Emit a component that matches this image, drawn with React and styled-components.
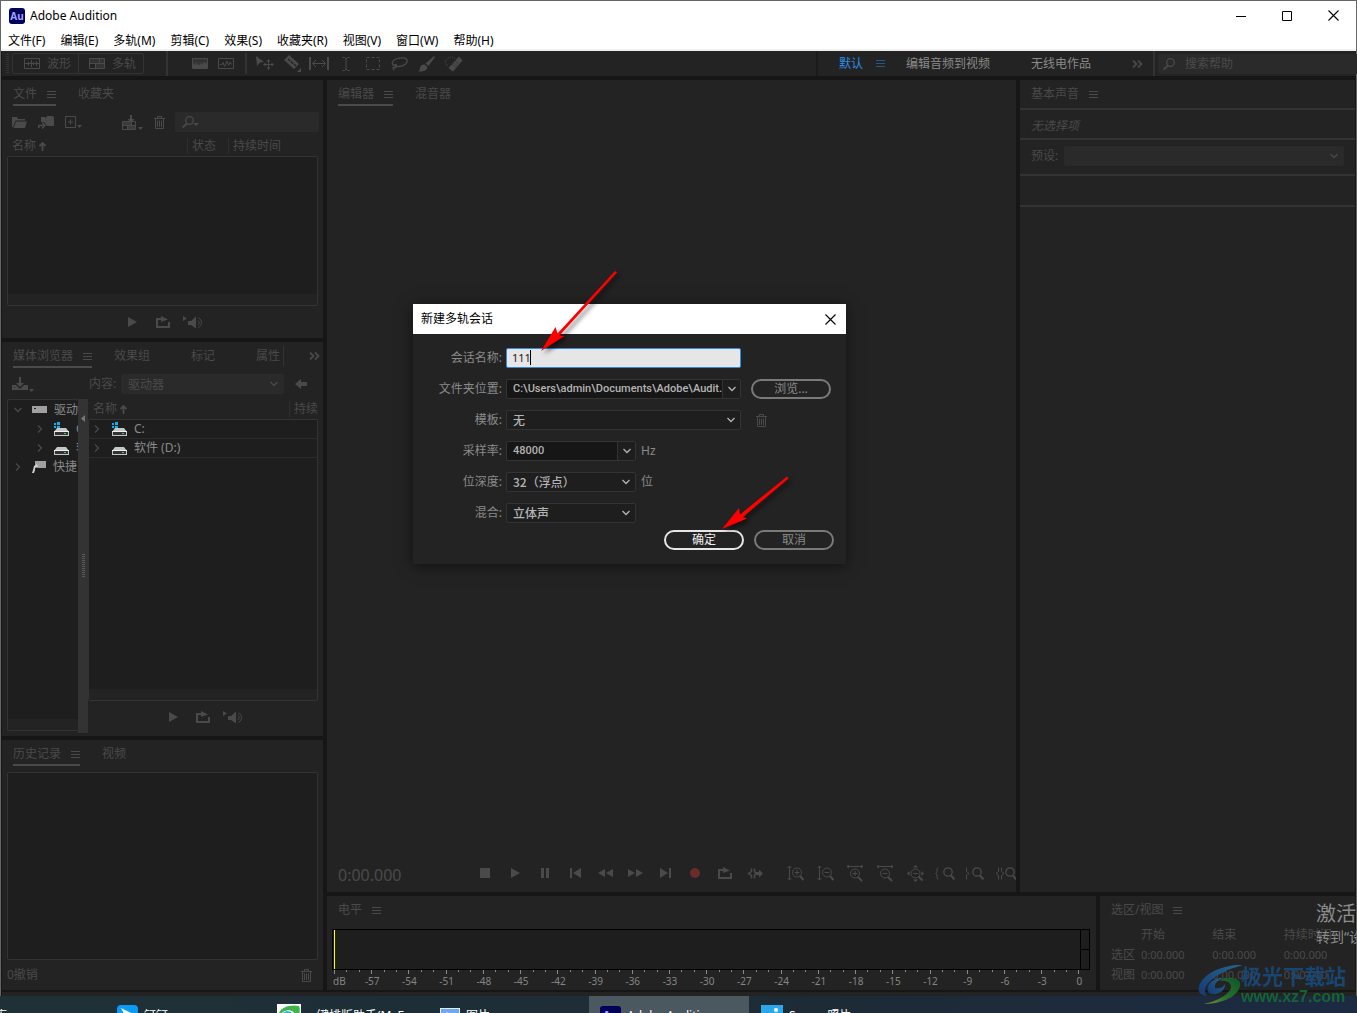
import React, { useState } from "react";
import styled, { createGlobalStyle } from "styled-components";

const GlobalStyle = createGlobalStyle`
	* {
		box-sizing: border-box;
	}
	body {
		margin: 0;
		background: #161616;
	}
	body, button, input, select, table {
		font-family: "Noto Sans", "Noto Sans CJK SC", sans-serif;
		font-size: 12px;
		line-height: 16px;
	}
	button, input, select {
		margin: 0;
		padding: 0;
		border: none;
		background: none;
		color: inherit;
	}
`;

const line = { fill: "none", stroke: "currentColor" };
const solid = { fill: "currentColor" };

/* every icon: [width, height, drawing] */
const icons = {
	menu: [9, 9, <path {...line} d="M0 1.5h9M0 4.5h9M0 7.5h9" />],
	chevronDown: [8, 6, <path {...line} strokeWidth="1.3" d="M.5 1l3.5 3.5L7.5 1" />],
	chevronRight: [6, 8, <path {...line} strokeWidth="1.2" d="M1 .5L4.5 4 1 7.5" />],
	more: [11, 8, <path {...line} strokeWidth="1.8" d="M1 .5L4.5 4 1 7.5M6 .5L9.5 4 6 7.5" />],
	sortUp: [7, 9, <path {...line} strokeWidth="1.8" d="M3.5 9V1M.5 4l3-3 3 3" />],
	minimize: [10, 10, <path {...line} d="M0 5.5h10" />],
	maximize: [10, 10, <path {...line} d="M.5.5h9v9h-9z" />],
	close: [11, 11, <path {...line} strokeWidth="1.1" d="M.5.5l10 10M10.5.5l-10 10" />],
	waveform: [
		16,
		11,
		<path {...line} d="M.5.5h15v10H.5zM1 5.5h14M4.5 3.5v4M7.5 2v7M9.5 4v3M12.5 3v5" />,
	],
	multitrack: [
		16,
		11,
		<>
			<path {...line} d="M.5.5h15v10H.5zM0 5.5h16M10.5 0v5M6.5 5v6" />
			<path {...solid} opacity=".4" d="M1 1h9v4H1zM11 1h4v4h-4zM7 6h8v4H7z" />
		</>,
	],
	spectral: [
		16,
		11,
		<>
			<path {...line} d="M.5.5h15v10H.5z" />
			<path {...solid} d="M1 10V6l1-1 1 2 1-3 1 3 1-2 1 2 2-2 1 2 1-3 1 2 1-3 1 3 1-2v6z" />
			<path {...solid} opacity=".4" d="M1 1h14v5H1z" />
		</>,
	],
	pitch: [
		16,
		11,
		<path {...line} d="M.5.5h15v10H.5zM2 6.5h2l1-2 1.5 4L9 3l1.5 4.5L12 4l1 2h1" />,
	],
	move: [
		18,
		15,
		<>
			<path {...solid} d="M0 0l8 6-4 .5L1 10zM12.5 3l2 2.5h-4zM12.5 14l2-2.5h-4zM7 8.5l2.5-2v4zM18 8.5l-2.5-2v4z" />
			<path {...line} d="M12.5 5v7M9 8.5h7" />
		</>,
	],
	razor: [
		18,
		17,
		<>
			<path {...solid} d="M1 5l5-5 10 9-5 5zM18 13v4h-4z" />
			<path d="M5 4l8 7" stroke="#232323" strokeWidth="1.5" strokeDasharray="3 1" />
		</>,
	],
	slip: [
		20,
		13,
		<>
			<path {...line} strokeWidth="2" d="M1 0v13M19 0v13" />
			<path {...line} d="M4 6.5h12M7 3L3.5 6.5 7 10M13 3l3.5 3.5L13 10" />
		</>,
	],
	ibeam: [8, 14, <path {...line} d="M.5.5h2L4 2 5.5.5h2M4 2v10M.5 13.5h2L4 12l1.5 1.5h2" />],
	marquee: [14, 13, <path {...line} strokeDasharray="3 2" d="M.5.5h13v12H.5z" />],
	lasso: [
		17,
		14,
		<path {...line} strokeWidth="1.3" d="M3 9C0 7 1 3.500 5 2s10-2 11 1-3 6-8 6.500C4 10 2.500 8 4 7.500s2 2 .5 3L2 11l1 2.500" />,
	],
	brush: [
		17,
		16,
		<path {...solid} d="M16 0l1 1-6.500 9-3-2.500zM6.500 8.500l3 2.500c-.5 4-5 5-9.500 4.500 2-.5 1.500-2 2-4s2.500-3.500 4.500-3z" />,
	],
	heal: [
		18,
		16,
		<>
			<path {...solid} d="M14 .5l3.500 4L8 15.500 3.500 12z" />
			<path {...line} strokeDasharray="1 1" d="M.5 7C0 3 3 1 8 1M1 8l2 2M9 2l2 1" />
			<path d="M10.500 5l3.500 3M7.500 8.500l3.500 3M9.500 7.500l2 2" stroke="#232323" strokeDasharray="1 1" />
		</>,
	],
	search: [
		12,
		12,
		<>
			<circle {...line} cx="7.5" cy="4.5" r="3.8" strokeWidth="1.3" />
			<path {...line} strokeWidth="1.8" d="M5 7.500L.5 11.500" />
		</>,
	],
	filter: [
		17,
		12,
		<>
			<circle {...line} cx="7.5" cy="4.5" r="3.8" strokeWidth="1.3" />
			<path {...line} strokeWidth="1.8" d="M5 7.500L.5 11.500" />
			<path {...solid} d="M11 7h6l-3 3z" />
		</>,
	],
	folder: [15, 12, <path {...solid} d="M0 11V1h5l1 2h7v1.500H3.500L1 11zM4 5.500h11L13 12H1.500z" />],
	importFile: [
		16,
		14,
		<>
			<path {...solid} d="M3 7V2h4l1 1.500L9 1h6v1h1v9H9l-3-4z" />
			<path {...line} strokeWidth="1.5" d="M0 10.500h6M4 7.500l3 3-3 3M.8 10V13" />
		</>,
	],
	newFile: [
		17,
		13,
		<>
			<path {...line} d="M.5.5h10v11H.5zM3 6h5M5.500 3.500v5" />
			<path {...solid} d="M12 9h5l-2.500 3z" />
		</>,
	],
	insert: [
		21,
		15,
		<>
			<path {...line} d="M.5 6.500h13v8H.5zM0 10.500h14M5.500 10v5M9.500 6v4" />
			<path {...solid} opacity=".6" d="M1 7h8v3H1zM6 11h8v3H6z" />
			<path {...solid} d="M8 0h2v4h2.500L9 8 5.500 4H8zM16 12h5l-2.500 3z" />
		</>,
	],
	trash: [
		11,
		13,
		<path {...line} d="M0 2.500h11M3.500 2V.5h4V2M1.500 3v9.500h8V3M3.500 4.500v6.500M5.500 4.500v6.500M7.500 4.500v6.500" />,
	],
	play: [9, 10, <path {...solid} d="M0 0l9 5-9 5z" />],
	loop: [
		14,
		12,
		<>
			<path {...line} strokeWidth="2" d="M4 3H1v8h12V6" />
			<path {...line} strokeWidth="2" d="M4 3h5" />
			<path {...solid} d="M5 0l7 3.500L5 6z" />
		</>,
	],
	speaker: [
		20,
		13,
		<>
			<path {...solid} d="M0 0l4 2.500L0 5zM5 5h3l5-4.500v12L8 9H5z" />
			<path {...line} d="M15 4.500c1.500 1 1.500 3 0 4.500M15.500 2c4 2 4 7 0 9.500" />
		</>,
	],
	download: [
		22,
		15,
		<>
			<path {...solid} d="M0 8h4l4 4 4-4h4v5H0zM7 0h2v6h3l-4 4-4-4h3zM17 12h5l-2.500 3z" />
			<path fill="#232323" d="M2 10h1v1H2z" />
		</>,
	],
	back: [12, 10, <path {...solid} d="M0 5l6-5v3h6v4H6v3z" />],
	drive: [
		15,
		7,
		<>
			<path fill="#a0a0a0" d="M0 0h15v7H0z" />
			<path fill="#222" d="M2 2h2v1H2z" />
		</>,
	],
	disk: [
		15,
		14,
		<>
			<path fill="#c4c8c8" d="M3 6h9l3 4v4H0v-4z" />
			<path fill="#f0f0f0" d="M0 9h15v1H0z" />
			<path fill="#333" d="M1 10h13v3H1z" />
			<path fill="#39d353" d="M10 11h2v1h-2z" />
		</>,
	],
	systemDisk: [
		15,
		14,
		<>
			<path fill="#c4c8c8" d="M3 6h9l3 4v4H0v-4z" />
			<path fill="#f0f0f0" d="M0 9h15v1H0z" />
			<path fill="#333" d="M1 10h13v3H1z" />
			<path fill="#39d353" d="M10 11h2v1h-2z" />
			<path fill="#0fb0f2" d="M0 1h2v2H0zM3 0h3v3H3zM0 4h2v2H0zM3 4h3v2H3z" />
		</>,
	],
	shortcut: [
		14,
		12,
		<>
			<path fill="#a0a0a0" d="M3 0h11v7H6L3 5z" />
			<path fill="#d0d0d0" d="M2 5l3-2 1 3-3 1v2l-1 3H0l1-3z" />
		</>,
	],
	stop: [10, 10, <path {...solid} d="M0 0h10v10H0z" />],
	pause: [8, 10, <path {...solid} d="M0 0h3v10H0zM5 0h3v10H5z" />],
	prev: [11, 10, <path {...solid} d="M0 0h2v10H0zM11 0v10L3 5z" />],
	next: [11, 10, <path {...solid} d="M9 0h2v10H9zM0 0v10l8-5z" />],
	rewind: [15, 8, <path {...solid} d="M7 0v8L0 4zM15 0v8L8 4z" />],
	forward: [15, 8, <path {...solid} d="M0 0v8l7-4zM8 0v8l7-4z" />],
	record: [10, 10, <circle cx="5" cy="5" r="5" fill="#6a2b2b" />],
	skip: [
		16,
		11,
		<>
			<path {...line} strokeWidth="1.5" d="M4.500.5v3L1.500 5.500l3 2v3M7.500.5v3L9 5.500l-1.500 2v3" />
			<path {...solid} d="M9 4h3V1.500l4 4-4 4V7H9z" />
		</>,
	],
	zoomInV: [
		17,
		17,
		<>
			<path {...line} d="M2.500 1v14M.5 3l2-2 2 2M.5 13l2 2 2-2M7.500 7.500h5M10 5v5" />
			<circle {...line} cx="10" cy="7.5" r="4.5" />
			<path {...line} strokeWidth="2" d="M13 11l3.500 4" />
		</>,
	],
	zoomOutV: [
		17,
		17,
		<>
			<path {...line} d="M2.500 1v14M.5 3l2-2 2 2M.5 13l2 2 2-2M7.500 7.500h5" />
			<circle {...line} cx="10" cy="7.5" r="4.5" />
			<path {...line} strokeWidth="2" d="M13 11l3.500 4" />
		</>,
	],
	zoomInH: [
		18,
		17,
		<>
			<path {...line} d="M1 1.500h16M3 0L1 1.500 3 3M15 0l2 1.500L15 3M6.500 8.500h5M9 6v5" />
			<circle {...line} cx="9" cy="8.5" r="4.5" />
			<path {...line} strokeWidth="2" d="M12 12l4 4" />
		</>,
	],
	zoomOutH: [
		18,
		17,
		<>
			<path {...line} d="M1 1.500h16M3 0L1 1.500 3 3M15 0l2 1.500L15 3M6.500 8.500h5" />
			<circle {...line} cx="9" cy="8.5" r="4.5" />
			<path {...line} strokeWidth="2" d="M12 12l4 4" />
		</>,
	],
	zoomFull: [
		17,
		17,
		<>
			<path {...solid} d="M8.500 0L11 2.500H6zM8.500 17l2.500-2.500H6zM0 8.500L2.500 6v5zM17 8.500L14.500 6v5z" />
			<path {...line} d="M6 8.500h5" />
			<circle {...line} cx="8.5" cy="8.5" r="4.5" />
			<path {...line} strokeWidth="2" d="M11.500 11.500l4 4" />
		</>,
	],
	zoomLeft: [
		20,
		13,
		<>
			<path {...line} d="M3 .5L2 2v3L.5 6.500 2 8v3l1 1.500" />
			<circle {...line} strokeWidth="1.3" cx="13" cy="5" r="4.2" />
			<path {...line} strokeWidth="2" d="M16 8.500l3.500 4" />
		</>,
	],
	zoomRight: [
		18,
		13,
		<>
			<path {...line} d="M.5.5v4L3 6.500l-2.500 2v4" />
			<circle {...line} strokeWidth="1.3" cx="11" cy="5" r="4.2" />
			<path {...line} strokeWidth="2" d="M14 8.500l3.500 4" />
		</>,
	],
	zoomSelection: [
		21,
		13,
		<>
			<path {...line} d="M3.500.5v4L1 6.500l2.500 2v4M6.500.5v4L9 6.500l-2.500 2v4" />
			<circle {...line} strokeWidth="1.3" cx="15" cy="5" r="4.2" />
			<path {...line} strokeWidth="2" d="M18 8.500l3 4" />
		</>,
	],
};

function Icon({ name }) {
	const [width, height, drawing] = icons[name];
	return (
		<IconSvg width={width} height={height} viewBox={`0 0 ${width} ${height}`} aria-hidden="true">
			{drawing}
		</IconSvg>
	);
}

const menus = [
	"文件(F)",
	"编辑(E)",
	"多轨(M)",
	"剪辑(C)",
	"效果(S)",
	"收藏夹(R)",
	"视图(V)",
	"窗口(W)",
	"帮助(H)",
];

const transport = ["stop", "play", "pause", "prev", "rewind", "forward", "next", "record", "loop", "skip"];
const zooms = [
	"zoomInV",
	"zoomOutV",
	"zoomInH",
	"zoomOutH",
	"zoomFull",
	"zoomLeft",
	"zoomRight",
	"zoomSelection",
];

function Tabs({ names, plain, children }) {
	return (
		<TabBar>
			{names.map((name, i) => (
				<Tab key={name} $active={i === 0 && !plain}>
					{name}
					{i === 0 && <Icon name="menu" />}
				</Tab>
			))}
			{children}
		</TabBar>
	);
}

function PreviewControls() {
	return (
		<Preview>
			<TransportButton aria-label="play"><Icon name="play" /></TransportButton>
			<TransportButton aria-label="loop"><Icon name="loop" /></TransportButton>
			<TransportButton aria-label="auto play"><Icon name="speaker" /></TransportButton>
		</Preview>
	);
}

function Dropdown({ id, options, width, split, dark, dim }) {
	return (
		<SelectWrap $width={width} $dim={dim}>
			<Select id={id} $dark={dark} $dim={dim}>
				{options.map((o) => (
					<option key={o}>{o}</option>
				))}
			</Select>
			<SelectArrow $split={split}>
				<Icon name="chevronDown" />
			</SelectArrow>
		</SelectWrap>
	);
}

function Toolbar() {
	return (
		<ToolBarRow>
			<Grip />
			<ModeGroup>
				<ModeButton><Icon name="waveform" />波形</ModeButton>
				<ModeButton><Icon name="multitrack" />多轨</ModeButton>
			</ModeGroup>
			<ViewTools>
				<IconButton aria-label="spectral"><Icon name="spectral" /></IconButton>
				<IconButton aria-label="pitch"><Icon name="pitch" /></IconButton>
			</ViewTools>
			<EditTools>
				{["move", "razor", "slip", "ibeam", "marquee", "lasso", "brush", "heal"].map((name) => (
					<ToolButton key={name} aria-label={name}>
						<Icon name={name} />
					</ToolButton>
				))}
			</EditTools>
			<Workspaces>
				<Workspace $active>默认<Icon name="menu" /></Workspace>
				<Workspace>编辑音频到视频</Workspace>
				<Workspace>无线电作品</Workspace>
				<IconButton aria-label="more"><Icon name="more" /></IconButton>
			</Workspaces>
			<HelpArea>
				<HelpSearch>
					<Icon name="search" />
					<HelpInput placeholder="搜索帮助" aria-label="搜索帮助" />
				</HelpSearch>
			</HelpArea>
		</ToolBarRow>
	);
}

function FilesPanel() {
	return (
		<Panel $grow={258}>
			<Tabs names={["文件", "收藏夹"]} />
			<FileTools>
				<FileButtons>
					<IconButton aria-label="open"><Icon name="folder" /></IconButton>
					<IconButton aria-label="import"><Icon name="importFile" /></IconButton>
					<IconButton aria-label="new"><Icon name="newFile" /></IconButton>
				</FileButtons>
				<FileButtons>
					<IconButton aria-label="insert"><Icon name="insert" /></IconButton>
					<IconButton aria-label="delete"><Icon name="trash" /></IconButton>
				</FileButtons>
				<FilterBox>
					<Icon name="filter" />
					<HelpInput aria-label="filter" />
				</FilterBox>
			</FileTools>
			<ListHead $inset>
				<HeadCell $grow>名称<Icon name="sortUp" /></HeadCell>
				<HeadCell>状态</HeadCell>
				<HeadCell $width="90px">持续时间</HeadCell>
			</ListHead>
			<List $inset />
			<PreviewControls />
		</Panel>
	);
}

function MediaPanel() {
	return (
		<Panel $grow={394}>
			<Tabs names={["媒体浏览器", "效果组", "标记", "属性"]}>
				<TabOverflow>
					<Icon name="more" />
				</TabOverflow>
			</Tabs>
			<MediaTools>
				<IconButton aria-label="download"><Icon name="download" /></IconButton>
				<ContentPick>
					<label htmlFor="content">内容:</label>
					<Dropdown id="content" options={["驱动器"]} width="163px" dim />
				</ContentPick>
				<IconButton aria-label="back"><Icon name="back" /></IconButton>
			</MediaTools>
			<MediaBody>
				<Tree>
					<TreeRow>
						<Toggle><Icon name="chevronDown" /></Toggle>
						<Icon name="drive" />驱动
					</TreeRow>
					<TreeRow $level={1}>
						<Toggle><Icon name="chevronRight" /></Toggle>
						<Icon name="systemDisk" />C:
					</TreeRow>
					<TreeRow $level={1}>
						<Toggle><Icon name="chevronRight" /></Toggle>
						<Icon name="disk" />软
					</TreeRow>
					<TreeRow>
						<Toggle><Icon name="chevronRight" /></Toggle>
						<Icon name="shortcut" />快捷
					</TreeRow>
				</Tree>
				<Splitter>
					<SplitArrow width="4" height="7" viewBox="0 0 4 7">
						<path d="M4 0v7L0 3.5z" fill="#777" />
					</SplitArrow>
					<SplitGrip />
				</Splitter>
				<MediaList>
					<ListHead>
						<HeadCell $grow>名称<Icon name="sortUp" /></HeadCell>
						<HeadCell $width="29px">持续</HeadCell>
					</ListHead>
					<List>
						<DriveRow>
							<Toggle><Icon name="chevronRight" /></Toggle>
							<Icon name="systemDisk" />C:
						</DriveRow>
						<DriveRow>
							<Toggle><Icon name="chevronRight" /></Toggle>
							<Icon name="disk" />软件 (D:)
						</DriveRow>
					</List>
					<PreviewControls />
				</MediaList>
			</MediaBody>
		</Panel>
	);
}

function HistoryPanel() {
	return (
		<Panel $grow={250}>
			<Tabs names={["历史记录", "视频"]} />
			<HistoryList />
			<HistoryFoot>
				0撤销
				<IconButton aria-label="clear"><Icon name="trash" /></IconButton>
			</HistoryFoot>
		</Panel>
	);
}

function LevelsPanel() {
	const steps = [];
	for (let db = -60; db <= 0; db++) steps.push(db);

	return (
		<LevelsBox>
			<Tabs names={["电平"]} plain />
			<Meter>
				<MeterBar />
				<MeterEnd>
					<Clip />
					<Clip />
				</MeterEnd>
			</Meter>
			<Scale>
				{steps.map((db) => (
					<Step key={db} $major={db % 3 === 0} $last={db === 0}>
						{db % 3 === 0 && <span>{db === -60 ? "dB" : db}</span>}
					</Step>
				))}
			</Scale>
		</LevelsBox>
	);
}

function SelectionPanel() {
	return (
		<SelectionBox>
			<Tabs names={["选区/视图"]} plain />
			<TimeTable>
				<thead>
					<tr>
						<td />
						<th>开始</th>
						<th>结束</th>
						<th>持续时间</th>
					</tr>
				</thead>
				<tbody>
					{["选区", "视图"].map((name) => (
						<tr key={name}>
							<th>{name}</th>
							<td>0:00.000</td>
							<td>0:00.000</td>
							<td>0:00.000</td>
						</tr>
					))}
				</tbody>
			</TimeTable>
		</SelectionBox>
	);
}

function SessionDialog() {
	const [name, setName] = useState("111");

	return (
		<Dialog role="dialog" aria-labelledby="dialog-title">
			<DialogTitle>
				<span id="dialog-title">新建多轨会话</span>
				<IconButton aria-label="close"><Icon name="close" /></IconButton>
			</DialogTitle>
			<Form>
				<Field>
					<label htmlFor="name">会话名称:</label>
					<NameBox>
						<NameInput id="name" value={name} onChange={(e) => setName(e.target.value)} />
						<Caret />
					</NameBox>
				</Field>
				<Field>
					<label htmlFor="folder">文件夹位置:</label>
					<Dropdown
						id="folder"
						options={["C:\\Users\\admin\\Documents\\Adobe\\Audit..."]}
						width="235px"
						split
						dark
					/>
					<PillButton>浏览...</PillButton>
				</Field>
				<Field>
					<label htmlFor="template">模板:</label>
					<Dropdown id="template" options={["无"]} width="235px" />
					<DeleteButton aria-label="delete template"><Icon name="trash" /></DeleteButton>
				</Field>
				<Field>
					<label htmlFor="rate">采样率:</label>
					<Dropdown id="rate" options={["48000"]} width="130px" split dark />
					<Unit>Hz</Unit>
				</Field>
				<Field>
					<label htmlFor="depth">位深度:</label>
					<Dropdown id="depth" options={["32（浮点）"]} width="130px" />
					<Unit>位</Unit>
				</Field>
				<Field>
					<label htmlFor="mix">混合:</label>
					<Dropdown id="mix" options={["立体声"]} width="130px" />
				</Field>
				<Actions>
					<PillButton $primary>确定</PillButton>
					<PillButton>取消</PillButton>
				</Actions>
			</Form>
		</Dialog>
	);
}

function Arrows() {
	return (
		<ArrowLayer width="400" height="280" viewBox="500 260 400 280" aria-hidden="true">
			<path fill="#f00" d="M541 351l14.500-24 2 6.500L615 271l2 1.500-57.500 63 5 .5z" />
			<path fill="#f00" d="M722 529l17-21 1 6.500L787 476.500l1.500 2L743 517l4 1.500z" />
		</ArrowLayer>
	);
}

function Taskbar() {
	return (
		<TaskbarClip>
			<TaskRow>
				<Task $left={-5}>库</Task>
				<Task $left={117}>
					<svg width="21" height="22" viewBox="0 0 21 22">
						<rect width="21" height="22" rx="4" fill="#0a9bf5" />
						<path fill="#fff" d="M4 3l12 6-2 5-3 5 1-5-4-3z" />
					</svg>
					钉钉
				</Task>
				<Task $left={277}>
					<svg width="24" height="24" viewBox="0 0 24 24">
						<path fill="#fff" d="M0 0h24v24H0z" />
						<path fill="#3fb549" d="M1 12C2 4 12 0 22 2c3 8-3 15-10 18 6-6 7-11 3-13C10 5 5 8 1 12z" />
						<path fill="#35a2dc" d="M2 13c3-5 8-7 12-5 2 4-2 9-8 12-3-1-5-3-4-7z" />
					</svg>
					<TaskText>一键排版助手(MyE</TaskText>
				</Task>
				<Task $left={440}>
					<svg width="20" height="16" viewBox="0 0 20 16">
						<path fill="#e8eef5" d="M0 0h20v16H0z" />
						<path fill="#6ea7f7" d="M1 1h18v14H1z" />
						<path fill="#cfe2fb" d="M3 7l4-3 5 5v6H3z" />
					</svg>
					图片
				</Task>
				<ActiveTask>
					<AuBadge $size={21}>Au</AuBadge>
					Adobe Audition
				</ActiveTask>
				<Task $left={761}>
					<svg width="22" height="22" viewBox="0 0 22 22">
						<path fill="#2aa9ea" d="M0 0h22v22H0z" />
						<circle cx="15" cy="5" r="2" fill="#fff" />
						<path fill="#1675c0" d="M0 14l6-7 9 15H0z" />
					</svg>
					Snap - 照片
				</Task>
			</TaskRow>
		</TaskbarClip>
	);
}

function Watermark() {
	return (
		<WatermarkBox>
			<svg width="46" height="42" viewBox="0 0 46 42" aria-hidden="true">
				<defs>
					<linearGradient id="swirlBlue" x1="1" y1="0" x2="0" y2="1">
						<stop offset="0" stopColor="#236f9c" />
						<stop offset="1" stopColor="#143c7c" />
					</linearGradient>
					<linearGradient id="swirlGreen" x1="1" y1="0" x2="0" y2="1">
						<stop offset="0" stopColor="#0e5c2c" />
						<stop offset=".6" stopColor="#2a7a2e" />
						<stop offset="1" stopColor="#9a9a22" />
					</linearGradient>
				</defs>
				<path fill="url(#swirlBlue)" d="M45 1C28 0 6 8 1 22c-2 7 3 10 8 10-5-6 0-13 8-19C24 8 34 4 45 1z" />
				<path fill="url(#swirlBlue)" d="M11 29c-5-7 4-16 15-15-7 2-10 6-9 10 5 1 9-1 10-4 1 6-8 13-16 9z" />
				<path fill="url(#swirlGreen)" d="M21 17c7-5 18-4 21 1 2 11-13 22-37 22 8-1 27-8 28-17 0-5-5-7-12-6z" />
			</svg>
			<SiteName>
				<strong>极光下载站</strong>
				<em>www.xz7.com</em>
			</SiteName>
		</WatermarkBox>
	);
}

export default function App() {
	return (
		<Page>
			<GlobalStyle />
			<Window>
				<TitleBar>
					<AuBadge $size={16}>Au</AuBadge>
					<AppName>Adobe Audition</AppName>
					<WindowButton aria-label="minimize"><Icon name="minimize" /></WindowButton>
					<WindowButton aria-label="maximize"><Icon name="maximize" /></WindowButton>
					<WindowButton aria-label="close window"><Icon name="close" /></WindowButton>
				</TitleBar>
				<MenuBar>
					{menus.map((m) => (
						<button key={m}>{m}</button>
					))}
				</MenuBar>
				<Toolbar />
				<Body>
					<Sidebar>
						<FilesPanel />
						<MediaPanel />
						<HistoryPanel />
					</Sidebar>
					<Main>
						<UpperRow>
							<Editor>
								<Tabs names={["编辑器", "混音器"]} />
								<TransportRow>
									<Clock>0:00.000</Clock>
									<TransportGroup>
										{transport.map((name) => (
											<TransportButton key={name} aria-label={name}>
												<Icon name={name} />
											</TransportButton>
										))}
									</TransportGroup>
									<TransportGroup>
										{zooms.map((name) => (
											<TransportButton key={name} aria-label={name}>
												<Icon name={name} />
											</TransportButton>
										))}
									</TransportGroup>
								</TransportRow>
							</Editor>
							<SoundPanel>
								<Tabs names={["基本声音"]} plain />
								<SoundRow><i>无选择项</i></SoundRow>
								<PresetRow>
									<label htmlFor="preset">预设:</label>
									<Dropdown id="preset" options={[""]} dim />
								</PresetRow>
								<SoundRow />
								<SoundRow />
							</SoundPanel>
						</UpperRow>
						<LowerRow>
							<LevelsPanel />
							<SelectionPanel />
						</LowerRow>
					</Main>
				</Body>
				<StatusBar />
			</Window>
			<Taskbar />
			<SessionDialog />
			<Arrows />
			<Activation>
				<h2>激活</h2>
				<p>转到“设</p>
			</Activation>
			<Watermark />
		</Page>
	);
}

const Page = styled.div`
	position: relative;
	display: flex;
	flex-direction: column;
	height: 100vh;
	overflow: hidden;
	color: #4a4a4a;
	white-space: nowrap;
`;
const IconSvg = styled.svg`
	display: block;
	flex: none;
`;
const AuBadge = styled.span`
	display: flex;
	flex: none;
	align-items: center;
	justify-content: center;
	width: ${(p) => p.$size}px;
	height: ${(p) => p.$size}px;
	border-radius: 3px;
	background: #00005b;
	color: #a3a3ff;
	font-size: ${(p) => (p.$size > 16 ? 12 : 10)}px;
	font-weight: bold;
`;
const Window = styled.div`
	display: flex;
	flex: 1;
	flex-direction: column;
	min-height: 0;
	border: 1px solid #666;
	border-bottom: none;
	background: #161616;
`;
const TitleBar = styled.header`
	display: flex;
	align-items: center;
	height: 29px;
	padding-left: 8px;
	background: #fff;
	color: #000;
`;
const AppName = styled.span`
	flex: 1;
	padding-left: 5px;
`;
const IconButton = styled.button`
	display: flex;
	align-items: center;
	justify-content: center;
`;
const WindowButton = styled(IconButton)`
	width: 46px;
	height: 29px;
`;
const MenuBar = styled.nav`
	display: flex;
	gap: 15px;
	height: 21px;
	padding: 2px 7px 0;
	border-bottom: 2px solid #f0f0f0;
	background: #fff;
	color: #000;
`;
const ToolBarRow = styled.div`
	display: flex;
	align-items: center;
	height: 25px;
	margin-left: 1px;
	background: #232323;
`;
const Grip = styled.span`
	width: 3px;
	height: 19px;
	margin: 0 3px 0 4px;
	background: repeating-linear-gradient(#333 0 1px, transparent 1px 2px);
`;
const ModeGroup = styled.div`
	display: flex;
	height: 21px;
	border: 1px solid #333;
	border-radius: 2px;
`;
const ModeButton = styled.button`
	display: flex;
	align-items: center;
	gap: 7px;
	padding: 0 7px 0 11px;
	& + & {
		padding-left: 10px;
		border-left: 1px solid #333;
	}
`;
const ViewTools = styled.div`
	display: flex;
	align-items: center;
	gap: 10px;
	align-self: stretch;
	margin-left: 22px;
	padding: 0 11px 0 24px;
	border-left: 2px solid #333;
`;
const EditTools = styled.div`
	display: flex;
	align-items: center;
	height: 21px;
	padding-left: 4px;
	border-left: 2px solid #333;
`;
const ToolButton = styled(IconButton)`
	width: 27px;
`;
const Workspaces = styled.div`
	display: flex;
	align-items: center;
	align-self: stretch;
	margin-left: auto;
	padding: 0 10px 0 21px;
	border-left: 2px solid #1b1b1b;
`;
const Workspace = styled.button`
	display: flex;
	align-items: center;
	gap: 13px;
	margin-right: ${(p) => (p.$active ? 21 : 41)}px;
	color: ${(p) => (p.$active ? "#2d8ceb" : "#8a8a8a")};
	svg {
		opacity: 0.5;
	}
`;
const HelpArea = styled.div`
	display: flex;
	align-items: center;
	align-self: stretch;
	width: 203px;
	padding: 0 4px 0 3px;
	border-left: 2px solid #333;
`;
const HelpSearch = styled.div`
	display: flex;
	flex: 1;
	align-items: center;
	gap: 10px;
	height: 20px;
	padding-left: 5px;
	border-radius: 2px;
	background: #2a2a2a;
`;
const HelpInput = styled.input`
	flex: 1;
	min-width: 0;
	&::placeholder {
		color: #4a4a4a;
	}
`;
const Body = styled.div`
	display: flex;
	flex: 1;
	gap: 4px;
	min-height: 0;
	padding: 4px 1px 2px;
`;
const Sidebar = styled.aside`
	display: flex;
	flex: none;
	flex-direction: column;
	gap: 4px;
	width: 321px;
`;
const Panel = styled.section`
	display: flex;
	flex: ${(p) => p.$grow} 1 0;
	flex-direction: column;
	min-height: 0;
	overflow: hidden;
	background: #232323;
`;
const TabBar = styled.div`
	display: flex;
	flex: none;
	gap: 22px;
	height: 26px;
	padding-left: 11px;
`;
const Tab = styled.button`
	display: flex;
	align-items: center;
	justify-content: space-between;
	gap: 10px;
	padding-right: ${(p) => (p.$active ? 0 : "19px")};
	padding-top: 4px;
	border-bottom: 2px solid ${(p) => (p.$active ? "#4a4a4a" : "transparent")};
`;
const TabOverflow = styled.div`
	display: flex;
	align-items: center;
	justify-content: center;
	flex: 1;
	height: 20px;
	margin: 4px 0 0 -38px;
	padding-left: 22px;
	border-left: 1px solid #333;
`;
const FileTools = styled.div`
	display: flex;
	align-items: center;
	justify-content: space-between;
	height: 20px;
	margin: 6px 4px 4px 10px;
`;
const FileButtons = styled.div`
	display: flex;
	align-items: center;
	gap: 11px;
	& + & {
		margin-left: 29px;
	}
`;
const FilterBox = styled(HelpSearch)`
	flex: none;
	width: 144px;
	padding-left: 7px;
`;
const ListHead = styled.div`
	display: flex;
	align-items: center;
	flex: none;
	height: 20px;
	margin: ${(p) => (p.$inset ? "0 5px" : 0)};
	padding-left: 5px;
`;
const HeadCell = styled.span`
	display: flex;
	align-items: center;
	gap: 3px;
	flex: ${(p) => (p.$grow ? "1" : "none")};
	width: ${(p) => p.$width || "41px"};
	padding-left: ${(p) => (p.$grow ? 0 : "4px")};
	border-left: ${(p) => (p.$grow ? "none" : "1px solid #2e2e2e")};
`;
const List = styled.div`
	flex: 1;
	min-height: 0;
	margin: ${(p) => (p.$inset ? "0 5px" : 0)};
	border: 1px solid #333;
	border-radius: 2px;
	background: linear-gradient(#232323, #232323) bottom / 100% 11px no-repeat #1e1e1e;
`;
const Preview = styled.div`
	display: flex;
	align-items: center;
	justify-content: center;
	flex: none;
	height: 32px;
`;
const MediaTools = styled.div`
	display: flex;
	align-items: center;
	justify-content: space-between;
	height: 20px;
	margin: 6px 16px 5px 10px;
`;
const ContentPick = styled.div`
	display: flex;
	align-items: center;
	gap: 5px;
	margin-left: 44px;
`;
const MediaBody = styled.div`
	display: flex;
	flex: 1;
	min-height: 0;
	margin: 0 5px 3px;
`;
const Tree = styled.div`
	width: 71px;
	margin-bottom: 2px;
	overflow: hidden;
	border: 1px solid #333;
	border-right: none;
	border-radius: 2px;
	background: linear-gradient(#232323, #232323) bottom / 100% 11px no-repeat #1e1e1e;
`;
const Toggle = styled.span`
	display: flex;
	justify-content: center;
	flex: none;
	width: 10px;
	color: #4a4a4a;
`;
const TreeRow = styled.div`
	display: flex;
	align-items: center;
	gap: 7px;
	height: 19px;
	padding-left: ${(p) => (p.$level ? 27 : 5)}px;
	color: #8a8a8a;
	${Toggle} {
		margin-right: 2px;
	}
`;
const Splitter = styled.div`
	display: flex;
	flex: none;
	flex-direction: column;
	align-items: center;
	justify-content: space-between;
	width: 10px;
	padding: 16px 0 155px;
	background: #333;
`;
const SplitArrow = styled.svg`
	display: block;
`;
const SplitGrip = styled.span`
	width: 3px;
	height: 24px;
	background: repeating-linear-gradient(#5a5a5a 0 1px, transparent 1px 2px);
`;
const MediaList = styled.div`
	display: flex;
	flex: 1;
	flex-direction: column;
	min-width: 0;
	overflow: hidden;
`;
const DriveRow = styled.div`
	display: flex;
	align-items: center;
	gap: 7px;
	height: 19px;
	padding-left: 3px;
	border-bottom: 1px solid #2b2b2b;
	color: #8a8a8a;
	${Toggle} {
		margin-right: 3px;
	}
`;
const HistoryList = styled.div`
	flex: 1;
	margin: 6px 5px 0;
	border: 1px solid #333;
	border-radius: 2px;
	background: #1e1e1e;
`;
const HistoryFoot = styled.div`
	display: flex;
	align-items: center;
	justify-content: space-between;
	height: 30px;
	padding: 0 11px 0 5px;
`;
const Main = styled.main`
	display: flex;
	flex: 1;
	flex-direction: column;
	gap: 4px;
	min-width: 0;
`;
const UpperRow = styled.div`
	display: flex;
	flex: 1;
	gap: 4px;
	min-height: 0;
`;
const Editor = styled.section`
	display: flex;
	flex: 1;
	flex-direction: column;
	justify-content: space-between;
	min-width: 0;
	overflow: hidden;
	background: #232323;
`;
const TransportRow = styled.div`
	display: flex;
	align-items: center;
	height: 38px;
	padding-left: 11px;
`;
const Clock = styled.span`
	flex: none;
	width: 132px;
	padding-top: 4px;
	font-size: 16px;
`;
const TransportGroup = styled.div`
	display: flex;
	flex: none;
	& + & {
		margin-left: 10px;
	}
`;
const TransportButton = styled(IconButton)`
	width: 30px;
	height: 20px;
`;
const SoundPanel = styled.section`
	width: 335px;
	background: #232323;
`;
const SoundRow = styled.div`
	display: flex;
	align-items: center;
	height: 31px;
	padding-left: 11px;
	border-top: 2px solid #333;
	${TabBar} + & {
		height: 30px;
		margin-top: 2px;
		padding-top: 3px;
	}
`;
const PresetRow = styled(SoundRow)`
	gap: 6px;
	height: 36px;
	padding: 0 11px 2px 11px;
`;
const SelectWrap = styled.span`
	position: relative;
	display: flex;
	flex: ${(p) => (p.$width ? "none" : 1)};
	width: ${(p) => p.$width || "auto"};
	height: 20px;
	color: ${(p) => (p.$dim ? "#4a4a4a" : "#b4b4b4")};
`;
const Select = styled.select`
	width: 100%;
	padding: 0 6px;
	appearance: none;
	border: 1px solid ${(p) => (p.$dim ? "#2a2a2a" : "#333")};
	border-radius: 2px;
	background: ${(p) => (p.$dim ? "#2a2a2a" : p.$dark ? "#161616" : "#1e1e1e")};
	font-family: ${(p) => (p.$dark ? "Roboto" : '"Noto Sans CJK SC"')}, sans-serif;
	font-size: ${(p) => (p.$dark ? 11 : 12)}px;
	font-weight: ${(p) => (p.$dim ? 400 : 500)};
`;
const SelectArrow = styled.span`
	position: absolute;
	top: 1px;
	right: 1px;
	bottom: 1px;
	display: flex;
	align-items: center;
	justify-content: center;
	width: 18px;
	border-left: ${(p) => (p.$split ? "1px solid #333" : "none")};
	background: ${(p) => (p.$split ? "#1e1e1e" : "none")};
	pointer-events: none;
`;
const LowerRow = styled.div`
	display: flex;
	gap: 4px;
	height: 94px;
`;
const LevelsBox = styled.section`
	flex: 1;
	min-width: 0;
	background: #232323;
`;
const Meter = styled.div`
	display: flex;
	height: 41px;
	margin: 7px 6px 0 5px;
	border: 1px solid #000;
	background: #1e1e1e;
`;
const MeterBar = styled.div`
	flex: 1;
	margin-left: 1px;
	border-left: 1px solid #ff0;
`;
const MeterEnd = styled.div`
	display: flex;
	flex-direction: column;
	width: 9px;
	border-left: 1px solid #000;
`;
const Clip = styled.span`
	flex: 1;
	& + & {
		border-top: 1px solid #000;
	}
`;
const Scale = styled.div`
	display: flex;
	margin: 0 17px 0 7px;
`;
const Step = styled.span`
	position: relative;
	flex: ${(p) => (p.$last ? "none" : "1")};
	width: 1px;
	height: ${(p) => (p.$major ? 4 : 2)}px;
	border-left: 1px solid #8a8a8a;
	span {
		position: absolute;
		top: 4px;
		left: -10px;
		width: 20px;
		color: #858585;
		font-size: 10px;
		line-height: 14px;
		text-align: center;
	}
	&:first-child span {
		left: -2px;
		text-align: left;
	}
`;
const SelectionBox = styled.section`
	width: 255px;
	background: #232323;
`;
const TimeTable = styled.table`
	width: 100%;
	margin-top: 3px;
	padding-left: 11px;
	border-spacing: 0;
	table-layout: fixed;
	th {
		padding: 0;
		font-weight: 400;
		text-align: left;
	}
	td {
		height: 20px;
		padding: 0;
		font-size: 11px;
	}
	tr > :first-child {
		width: 30px;
	}
`;
const StatusBar = styled.footer`
	height: 4px;
	margin-left: 1px;
	background: #232323;
`;
const Dialog = styled.div`
	position: absolute;
	top: 304px;
	left: 413px;
	width: 433px;
	background: #232323;
	box-shadow: 0 2px 14px rgba(0, 0, 0, 0.5);
	color: #8a8a8a;
`;
const DialogTitle = styled.div`
	display: flex;
	align-items: center;
	justify-content: space-between;
	height: 30px;
	padding: 0 10px 0 8px;
	background: #fff;
	color: #000;
`;
const Form = styled.form`
	display: flex;
	flex-direction: column;
	gap: 11px;
	padding: 14px 12px;
`;
const Field = styled.div`
	display: flex;
	align-items: center;
	height: 20px;
	label {
		width: 77px;
		margin-right: 4px;
		text-align: right;
	}
`;
const NameBox = styled.span`
	position: relative;
	display: flex;
	width: 235px;
	height: 20px;
`;
const NameInput = styled.input`
	width: 100%;
	padding: 0 5px;
	border: 1px solid #2d8ceb;
	border-radius: 2px;
	background: #e6e6e6;
	color: #222;
	font-size: 11px;
`;
const Caret = styled.span`
	position: absolute;
	top: 2px;
	left: 24px;
	width: 1px;
	height: 15px;
	background: #000;
`;
const PillButton = styled.button.attrs({ type: "button" })`
	width: 80px;
	height: 20px;
	border: 2px solid ${(p) => (p.$primary ? "#e6e6e6" : "#7a7a7a")};
	border-radius: 10px;
	color: ${(p) => (p.$primary ? "#f0f0f0" : "#8a8a8a")};
	line-height: 14px;
	${Field} & {
		margin-left: 10px;
	}
`;
const DeleteButton = styled(IconButton)`
	margin-left: 15px;
	color: #4a4a4a;
`;
const Unit = styled.span`
	margin-left: 5px;
`;
const Actions = styled.div`
	display: flex;
	justify-content: flex-end;
	gap: 10px;
	margin-top: -4px;
`;
const ArrowLayer = styled.svg`
	position: absolute;
	top: 260px;
	left: 500px;
	filter: drop-shadow(3px 3px 2px rgba(0, 0, 0, 0.5));
	pointer-events: none;
`;
const TaskbarClip = styled.div`
	height: 17px;
	overflow: hidden;
	background: linear-gradient(90deg, #1f3137, #1d2b36 60%, #1c2a42);
	color: #fff;
`;
const TaskRow = styled.div`
	position: relative;
	height: 40px;
`;
const Task = styled.a.attrs({ href: "#" })`
	position: absolute;
	left: ${(p) => p.$left}px;
	display: flex;
	align-items: center;
	gap: 6px;
	height: 40px;
	color: inherit;
	text-decoration: none;
`;
const TaskText = styled.span`
	margin-left: -2px;
`;
const ActiveTask = styled(Task)`
	left: 589px;
	width: 160px;
	padding-left: 11px;
	background: #4b585f;
`;
const Activation = styled.div`
	position: absolute;
	right: 0;
	bottom: 66px;
	width: 41px;
	overflow: hidden;
	color: #8c8c8c;
	h2 {
		margin: 0;
		font-size: 20px;
		font-weight: 400;
		line-height: 26px;
	}
	p {
		margin: 0;
		font-size: 14px;
		line-height: 20px;
	}
`;
const WatermarkBox = styled.div`
	position: absolute;
	right: 11px;
	bottom: 7px;
	display: flex;
	align-items: center;
	opacity: 0.9;
`;
const SiteName = styled.div`
	display: flex;
	flex-direction: column;
	margin-left: -3px;
	strong {
		color: #174a7c;
		font-size: 21px;
		line-height: 24px;
	}
	em {
		color: #146b34;
		font-family: "Liberation Sans", sans-serif;
		font-size: 16px;
		font-style: normal;
		font-weight: bold;
		line-height: 18px;
	}
`;
